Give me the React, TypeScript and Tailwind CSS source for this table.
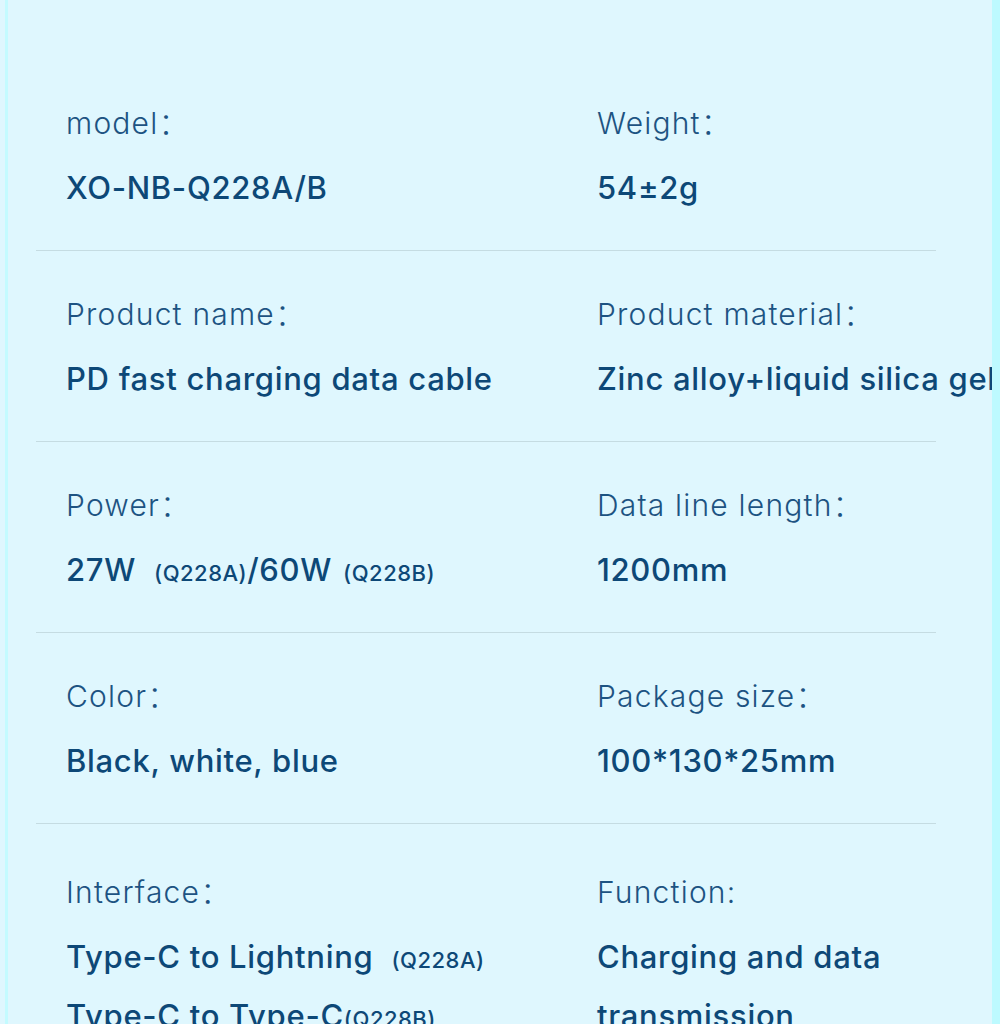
import React from "react";

type Cell = { label: React.ReactNode; value: React.ReactNode };
type Row = { l: Cell; r: Cell };

const Small = ({ children, className = "" }: { children: React.ReactNode; className?: string }) => (
  <span className={"text-[22px] leading-none tracking-[0.5px] " + className}>{children}</span>
);

const Colon = () => <span>：</span>;

const rows: Row[] = [
  {
    l: { label: <>model<Colon /></>, value: "XO-NB-Q228A/B" },
    r: { label: <>Weight<Colon /></>, value: "54±2g" },
  },
  {
    l: { label: <>Product name<Colon /></>, value: "PD fast charging data cable" },
    r: { label: <>Product material<Colon /></>, value: "Zinc alloy+liquid silica gel" },
  },
  {
    l: {
      label: <>Power<Colon /></>,
      value: (
        <>
          27W<Small className="ml-[18px]">(Q228A)</Small>/60W<Small className="ml-[11px]">(Q228B)</Small>
        </>
      ),
    },
    r: { label: <>Data line length<Colon /></>, value: "1200mm" },
  },
  {
    l: { label: <>Color<Colon /></>, value: "Black, white, blue" },
    r: { label: <>Package size<Colon /></>, value: "100*130*25mm" },
  },
  {
    l: {
      label: <>Interface<Colon /></>,
      value: (
        <>
          Type-C to Lightning<Small className="ml-[18px]">(Q228A)</Small>
          <br />
          Type-C to Type-C<Small>(Q228B)</Small>
        </>
      ),
    },
    r: {
      label: "Function:",
      value: (
        <>
          Charging and data
          <br />
          transmission
        </>
      ),
    },
  },
];

function Cell({ label, value }: Cell) {
  return (
    <div className="flex flex-col gap-[15px] whitespace-nowrap">
      <div className="h-[40px] text-[30px] leading-[40px] font-light tracking-[1.2px] text-[#1d5382]">{label}</div>
      <div className="text-[31px] leading-[59px] font-medium tracking-[0.7px] text-[#0d4877]">{value}</div>
    </div>
  );
}

export default function App() {
  return (
    <div
      className="flex w-[1000px] h-[1024px] overflow-hidden bg-[#dff7fe]"
      style={{ fontFamily: 'Inter, "Noto Sans", "Noto Sans CJK SC", sans-serif' }}
    >
      <div className="w-[5px] shrink-0" />
      <div className="w-[3px] shrink-0 bg-[#c4fbff]" />
      <div className="flex-1 min-w-0 pt-[58px] pl-[28px] pr-[56px]">
        {rows.map((row, i) => (
          <div
            key={i}
            className={
              "grid grid-cols-[531px_1fr] pl-[30px] pb-[33px] border-b border-[#c5dce2] " +
              (i === rows.length - 1 ? "pt-[48px]" : i === 0 ? "pt-[45px]" : "pt-[43px]")
            }
          >
            <Cell {...row.l} />
            <Cell {...row.r} />
          </div>
        ))}
      </div>
      <div className="w-[8px] shrink-0 bg-[#bdfaff]" />
    </div>
  );
}
